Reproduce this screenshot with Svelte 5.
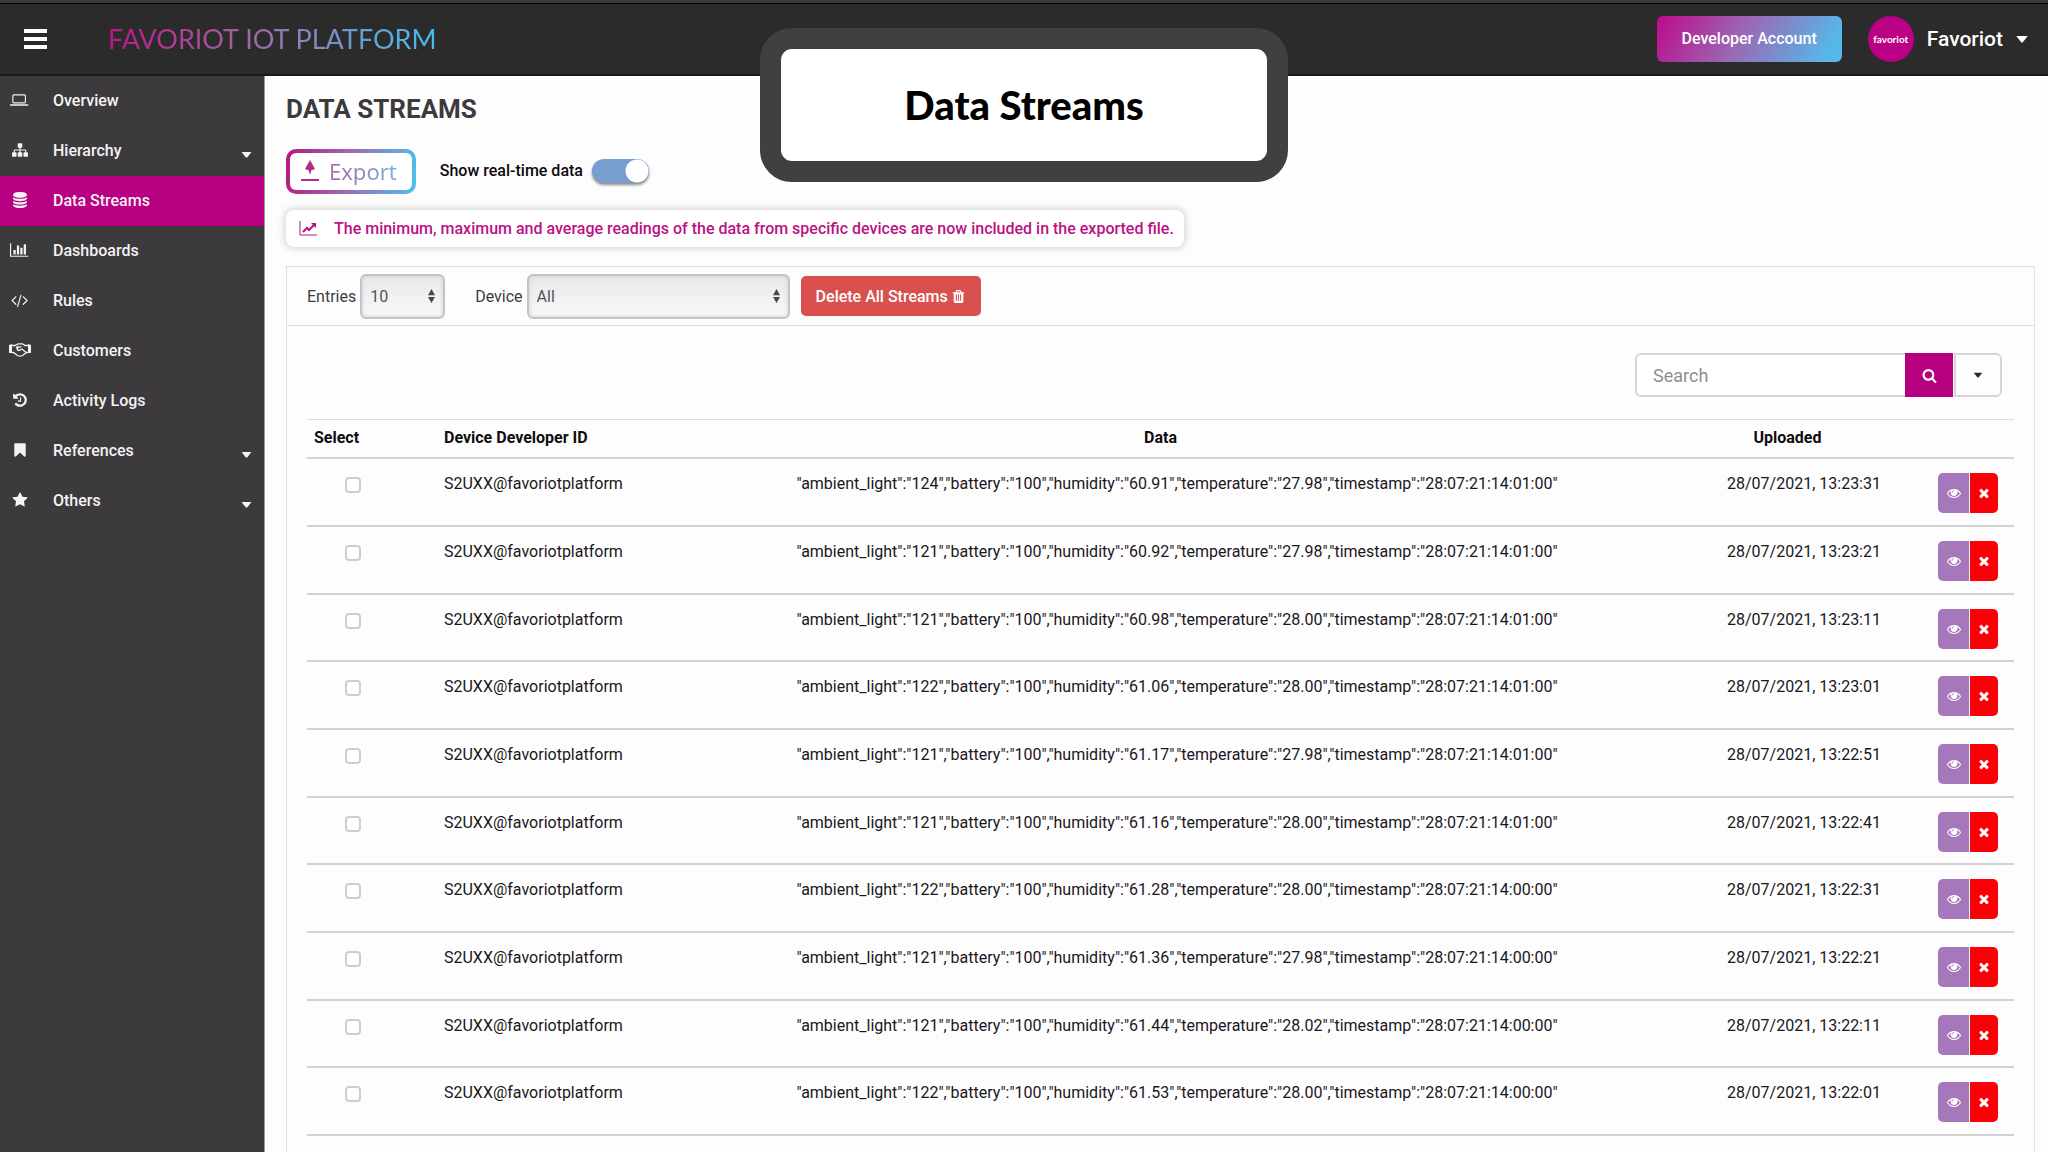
<script>
  const icons = {
    laptop: {
      box: '0 0 2048 1792',
      path: 'M416 1280q-66 0-113-47t-47-113V416q0-66 47-113t113-47h1216q66 0 113 47t47 113v704q0 66-47 113t-113 47H416zM384 416v704q0 32 32 32h1216q32 0 32-32V416q0-32-32-32H416q-32 0-32 32zM2048 1376v96q0 64-160 64H160q-160 0-160-64v-96h2048z'
    },
    sitemap: {
      box: '0 0 1792 1792',
      path: 'M1792 1248v320q0 40-28 68t-68 28h-320q-40 0-68-28t-28-68v-320q0-40 28-68t68-28h96V960H960v192h96q40 0 68 28t28 68v320q0 40-28 68t-68 28H736q-40 0-68-28t-28-68v-320q0-40 28-68t68-28h96V960H320v192h96q40 0 68 28t28 68v320q0 40-28 68t-68 28H96q-40 0-68-28t-28-68v-320q0-40 28-68t68-28h96V960q0-52 38-90t90-38h512V640h-96q-40 0-68-28t-28-68V224q0-40 28-68t68-28h320q40 0 68 28t28 68v320q0 40-28 68t-68 28h-96v192h512q52 0 90 38t38 90v192h96q40 0 68 28t28 68z'
    },
    database: {
      box: '0 0 1792 1792',
      path: 'M896 768q237 0 443-43t325-127v170q0 69-103 128t-280 93.500-385 34.500-385-34.500T231 896 128 768V598q119 84 325 127t443 43zm0 768q237 0 443-43t325-127v170q0 69-103 128t-280 93.500-385 34.500-385-34.500-280-93.500-103-128v-170q119 84 325 127t443 43zm0-384q237 0 443-43t325-127v170q0 69-103 128t-280 93.500-385 34.500-385-34.500-280-93.500-103-128V982q119 84 325 127t443 43zM896 0q208 0 385 34.500t280 93.500 103 128v128q0 69-103 128t-280 93.500T896 640t-385-34.500T231 512 128 384V256q0-69 103-128t280-93.500T896 0z'
    },
    chart: {
      box: '0 0 2048 1792',
      path: 'M640 896v512H384V896h256zm384-512v1024H768V384h256zm1024 1152v128H0V128h128v1408h1920zm-640-896v768h-256V640h256zm384-384v1152h-256V256h256z'
    },
    code: {
      box: '0 0 1920 1792',
      path: 'M617 1399l-50 50q-10 10-23 10t-23-10L55 983q-10-10-10-23t10-23l466-466q10-10 23-10t23 10l50 50q10 10 10 23t-10 23L224 960l393 393q10 10 10 23t-10 23zM1176 359L803 1650q-4 13-15.500 19.500T764 1672l-62-17q-13-4-19.500-15.500T680 1615l373-1291q4-13 15.500-19.500T1092 302l62 17q13 4 19.500 15.500T1176 359zM1865 983l-466 466q-10 10-23 10t-23-10l-50-50q-10-10-10-23t10-23l393-393-393-393q-10-10-10-23t10-23l50-50q10-10 23-10t23 10l466 466q10 10 10 23t-10 23z'
    },
    history: {
      box: '0 0 1792 1792',
      path: 'M1664 896q0 156-61 298t-164 245-245 164-298 61q-172 0-327-72.500T305 1387q-7-10-6.500-22.500t8.500-20.500l137-138q10-9 25-9 16 2 23 12 73 95 179 147t225 52q104 0 198.500-40.500T1258 1258t109.500-163.500T1408 896t-40.500-198.500T1258 534t-163.500-109.500T896 384q-98 0-188 35.500T548 521l137 138q31 30 14 69-17 40-59 40H192q-26 0-45-19t-19-45V256q0-42 40-59 39-17 69 14l130 129q107-101 244.500-156.500T896 128q156 0 298 61t245 164 164 245 61 298zM1024 608v448q0 14-9 23t-23 9H672q-14 0-23-9t-9-23v-64q0-14 9-23t23-9h224V608q0-14 9-23t23-9h64q14 0 23 9t9 23z'
    },
    bookmark: {
      box: '0 0 1792 1792',
      path: 'M1420 128q23 0 44 9 33 13 52.500 41t19.500 62v1289q0 34-19.500 62t-52.500 41q-19 8-44 8-48 0-83-32l-441-424-441 424q-36 33-83 33-23 0-44-9-33-13-52.500-41t-19.500-62V240q0-34 19.500-62t52.500-41q21-9 44-9h1048z'
    },
    star: {
      box: '0 0 1792 1792',
      path: 'M1728 647q0 22-26 48l-363 354 86 500q1 7 1 20 0 21-10.500 35.500t-30.500 14.500q-19 0-40-12l-449-236-449 236q-22 12-40 12-21 0-31.500-14.500t-10.500-35.500q0-6 2-20l86-500-364-354q-25-27-25-48 0-37 56-46l502-73 225-455q19-41 49-41t49 41l225 455 502 73q56 9 56 46z'
    },
    trash: {
      box: '0 0 1792 1792',
      path: 'M704 1376V672q0-14-9-23t-23-9h-64q-14 0-23 9t-9 23v704q0 14 9 23t23 9h64q14 0 23-9t9-23zm256 0V672q0-14-9-23t-23-9h-64q-14 0-23 9t-9 23v704q0 14 9 23t23 9h64q14 0 23-9t9-23zm256 0V672q0-14-9-23t-23-9h-64q-14 0-23 9t-9 23v704q0 14 9 23t23 9h64q14 0 23-9t9-23zM672 384h448l-48-117q-7-9-17-11H738q-10 2-17 11zm928 32v64q0 14-9 23t-23 9h-96v948q0 83-47 143.500t-113 60.500H480q-66 0-113-58.500T320 1464V512h-96q-14 0-23-9t-9-23v-64q0-14 9-23t23-9h309l70-167q15-37 54-63t79-26h320q40 0 79 26t54 63l70 167h309q14 0 23 9t9 23z'
    },
    search: {
      box: '0 0 1792 1792',
      path: 'M1216 832q0-185-131.500-316.500T768 384 451.500 515.500 320 832t131.500 316.500T768 1280t316.500-131.500T1216 832zm512 832q0 52-38 90t-90 38q-54 0-90-38l-343-342q-179 124-399 124-143 0-273.500-55.500t-225-150-150-225T64 832t55.500-273.500 150-225 225-150T768 128t273.500 55.500 225 150 150 225T1472 832q0 220-124 399l343 343q37 37 37 90z'
    },
    eye: {
      box: '0 0 1792 1792',
      path: 'M1664 960q-152-236-381-353 61 104 61 225 0 185-131.500 316.500T896 1280t-316.500-131.500T448 832q0-121 61-225-229 117-381 353 133 205 333.500 326.500T896 1408t434.500-121.500T1664 960zM944 576q0-20-14-34t-34-14q-125 0-214.500 89.500T592 832q0 20 14 34t34 14 34-14 14-34q0-86 61-147t147-61q20 0 34-14t14-34zm848 384q0 34-20 69-140 230-376.500 368.500T896 1536t-499.500-139T20 1029Q0 994 0 960t20-69q140-229 376.500-368T896 384t499.500 139T1772 891q20 35 20 69z'
    },
    close: {
      box: '0 0 1792 1792',
      path: 'M1490 1322q0 40-28 68l-136 136q-28 28-68 28t-68-28l-294-294-294 294q-28 28-68 28t-68-28l-136-136q-28-28-28-68t28-68l294-294-294-294q-28-28-28-68t28-68l136-136q28-28 68-28t68 28l294 294 294-294q28-28 68-28t68 28l136 136q28 28 28 68t-28 68l-294 294 294 294q28 28 28 68z'
    }
  };

  const menu = [
    { label: 'Overview', icon: 'laptop' },
    { label: 'Hierarchy', icon: 'sitemap', sub: true },
    { label: 'Data Streams', icon: 'database', active: true },
    { label: 'Dashboards', icon: 'chart' },
    { label: 'Rules', icon: 'code' },
    { label: 'Customers', icon: 'handshake' },
    { label: 'Activity Logs', icon: 'history' },
    { label: 'References', icon: 'bookmark', sub: true },
    { label: 'Others', icon: 'star', sub: true }
  ];

  const readings = [
    ['124', '60.91', '27.98', '01', '13:23:31'],
    ['121', '60.92', '27.98', '01', '13:23:21'],
    ['121', '60.98', '28.00', '01', '13:23:11'],
    ['122', '61.06', '28.00', '01', '13:23:01'],
    ['121', '61.17', '27.98', '01', '13:22:51'],
    ['121', '61.16', '28.00', '01', '13:22:41'],
    ['122', '61.28', '28.00', '00', '13:22:31'],
    ['121', '61.36', '27.98', '00', '13:22:21'],
    ['121', '61.44', '28.02', '00', '13:22:11'],
    ['122', '61.53', '28.00', '00', '13:22:01']
  ];

  const rows = readings.map(([light, humidity, temperature, minute, time]) => ({
    data: `"ambient_light":"${light}","battery":"100","humidity":"${humidity}","temperature":"${temperature}","timestamp":"28:07:21:14:${minute}:00"`,
    uploaded: `28/07/2021, ${time}`
  }));
</script>

{#snippet icon(name)}
  <svg class="icon {name}" viewBox={icons[name].box} aria-hidden="true"><path d={icons[name].path} /></svg>
{/snippet}

{#snippet caret()}
  <svg class="caret" viewBox="0 0 12 8" aria-hidden="true"><path d="M1 1h10q1 0 0 1L7 7q-1 1-2 0L1 2q-1-1 0-1z" /></svg>
{/snippet}

{#snippet sorter()}
  <svg class="sorter" viewBox="0 0 8 16" aria-hidden="true"><path d="M4 0l4 7H0zM4 16L0 9h8z" /></svg>
{/snippet}

<header class="topbar">
  <button class="burger" aria-label="Toggle menu">
    <svg viewBox="0 0 23 20" aria-hidden="true"><path d="M0 0h23v4H0zM0 8h23v4H0zM0 16h23v4H0z" /></svg>
  </button>
  <a class="brand" href="#home">FAVORIOT IOT PLATFORM</a>
  <button class="account">Developer Account</button>
  <button class="user">
    <span class="avatar">favoriot</span>
    <span>Favoriot</span>
    {@render caret()}
  </button>
</header>

<div class="callout"><div class="callout-box">Data Streams</div></div>

<div class="layout">
  <nav class="sidebar">
    {#each menu as item}
      <a href="#{item.icon}" class:active={item.active}>
        <span class="slot">
          {#if item.icon === 'handshake'}
            <svg class="icon handshake" viewBox="0 0 22 14" aria-hidden="true">
              <path class="solid" d="M0 2l3-1v9H0zM22 2l-3-1v9h3z" />
              <path class="line" d="M3 2.500h3L9 .8h4.500l2.500 1.700h3M3 9.500h1.500l4 3q2.500 1.200 5 0l4-3H19M12.500 3.500L8.500 5q-1 2 1.500 2.500L13 6l4 3.500M9.500 3L7 5" />
            </svg>
          {:else}
            {@render icon(item.icon)}
          {/if}
        </span>
        <span class="label">{item.label}</span>
        {#if item.sub}{@render caret()}{/if}
      </a>
    {/each}
  </nav>

  <main>
    <h1>DATA STREAMS</h1>

    <div class="actions">
      <button class="export">
        <svg viewBox="0 0 18 22" aria-hidden="true"><path d="M9 0l5 9q-2 1-3.500 1L9 15l-1.500-5Q6 10 4 9zM0 19h18v2H0z" /></svg>
        <span>Export</span>
      </button>
      <label for="realtime">Show real-time data</label>
      <input id="realtime" class="switch" type="checkbox" checked />
    </div>

    <p class="notice">
      <svg viewBox="0 0 18 15" aria-hidden="true">
        <path class="axis" d="M1 0v14h17" />
        <path class="trend" d="M4 11l4-4 2 2 5-5" />
        <path class="tip" d="M12 2h5v5z" />
      </svg>
      <span>The minimum, maximum and average readings of the data from specific devices are now included in the exported file.</span>
    </p>

    <section class="panel">
      <div class="filters">
        <label for="entries">Entries</label>
        <span class="select entries">
          <select id="entries"><option>10</option></select>
          {@render sorter()}
        </span>
        <label for="device" class="device-label">Device</label>
        <span class="select device">
          <select id="device"><option>All</option></select>
          {@render sorter()}
        </span>
        <button class="delete-all">Delete All Streams {@render icon('trash')}</button>
      </div>

      <div class="content">
        <form class="search-bar">
          <input type="search" placeholder="Search" aria-label="Search" />
          <button type="button" class="go" aria-label="Search">{@render icon('search')}</button>
          <button type="button" class="more" aria-label="Search options">{@render caret()}</button>
        </form>

        <table>
          <thead>
            <tr>
              <th class="pick">Select</th>
              <th class="owner">Device Developer ID</th>
              <th class="center">Data</th>
              <th class="when center">Uploaded</th>
              <th class="tools" aria-label="Actions"></th>
            </tr>
          </thead>
          <tbody>
            {#each rows as row}
              <tr>
                <td><input class="tick" type="checkbox" aria-label="Select row {row.uploaded}" /></td>
                <td>S2UXX@favoriotplatform</td>
                <td class="center">{row.data}</td>
                <td class="center">{row.uploaded}</td>
                <td>
                  <div class="pair">
                    <button class="view" aria-label="View">{@render icon('eye')}</button>
                    <button class="remove" aria-label="Delete">{@render icon('close')}</button>
                  </div>
                </td>
              </tr>
            {/each}
          </tbody>
        </table>
      </div>
    </section>
  </main>
</div>

<style>
  :global(html) {
    height: 100%;
    overflow: hidden;
  }
  :global(body) {
    height: 100%;
    overflow: hidden;
    background: #fefdfe;
    color: #19171a;
    font-family: Roboto, 'Liberation Sans', sans-serif;
    font-size: 16px;
  }
  :global(#app) {
    min-height: 100%;
    display: flex;
    flex-direction: column;
  }
  button,
  input,
  select {
    font: inherit;
    color: inherit;
    margin: 0;
    padding: 0;
    border: 0;
    box-sizing: border-box;
  }
  button {
    background: none;
    cursor: pointer;
  }
  svg {
    fill: currentColor;
    flex: none;
    display: block;
  }
  .icon {
    height: 16px;
  }
  .caret {
    width: 12px;
    height: 8px;
  }

  .topbar {
    display: flex;
    align-items: center;
    height: 76px;
    box-sizing: border-box;
    padding: 0 20px 0 24px;
    border-top: 3px solid #3a393b;
    border-bottom: 2px solid #1b191b;
    box-shadow: inset 0 1px #000;
    background: #2b2b2b;
    color: #fff;
  }
  .burger svg {
    width: 23px;
    height: 20px;
  }
  .brand {
    margin: 0 auto 0 61px;
    font: 27px/36px Lato, sans-serif;
    text-decoration: none;
    color: transparent;
    background: linear-gradient(90deg, #b8168a, #a4619f 40%, #8388bb 60%, #45bdf0);
    background-clip: text;
  }
  .account {
    height: 46px;
    padding: 0 25px;
    border-radius: 6px;
    background: linear-gradient(120deg, #bd0a8a, #9a68b4 45%, #56b8ea 92%);
    font-weight: 500;
  }
  .user {
    display: flex;
    align-items: center;
    gap: 13px;
    margin-left: 26px;
    font-size: 21px;
    font-weight: 500;
  }
  .avatar {
    display: grid;
    place-items: center;
    width: 46px;
    height: 46px;
    border-radius: 50%;
    background: #bb0085;
    font: bold 10px Lato, sans-serif;
  }

  .callout {
    position: absolute;
    top: 28px;
    left: 0;
    right: 0;
    display: flex;
    justify-content: center;
    pointer-events: none;
  }
  .callout-box {
    display: grid;
    place-items: center;
    width: 486px;
    height: 112px;
    border: 21px solid #423f42;
    border-radius: 32px;
    background: #fff;
    color: #000;
    font: 900 40px Lato, sans-serif;
  }

  .layout {
    flex: 1;
    display: flex;
  }
  .sidebar {
    flex: none;
    width: 264px;
    background: #3d3a3d;
    border-right: 1px solid #9c9a9c;
    color: #f4f2f4;
  }
  .sidebar a {
    display: flex;
    align-items: center;
    box-sizing: border-box;
    height: 50px;
    padding: 0 12px 2px 8px;
    color: inherit;
    text-decoration: none;
    font-weight: 500;
  }
  .sidebar a.active {
    background: #b80082;
  }
  .slot {
    display: grid;
    place-items: center;
    width: 23px;
    margin-right: 22px;
  }
  .label {
    flex: 1;
  }
  .sidebar .caret {
    width: 11px;
    height: 7px;
    margin-top: 8px;
  }
  .icon.handshake {
    width: 22px;
    height: 14px;
  }
  .handshake .line {
    fill: none;
    stroke: currentColor;
    stroke-width: 1.3;
  }

  main {
    flex: 1;
    min-width: 0;
    display: flex;
    flex-direction: column;
    padding: 18px 13px 0 21px;
  }
  h1 {
    margin: 0 0 24px;
    font-size: 26px;
    line-height: 31px;
    font-weight: 700;
    color: #3d3a3d;
  }
  .actions {
    display: flex;
    align-items: center;
    margin-bottom: 16px;
    font-weight: 500;
    color: #0b090b;
  }
  .export {
    display: flex;
    align-items: center;
    gap: 10px;
    height: 45px;
    padding: 0 15px 2px 11px;
    margin-right: 24px;
    border: 4px solid transparent;
    border-radius: 10px;
    background:
      linear-gradient(#fff, #fff) padding-box,
      linear-gradient(100deg, #b9157f, #9a6fb0 50%, #4fc0f0) border-box;
    font: 22px 'Noto Sans', sans-serif;
    color: #b52a88;
  }
  .export svg {
    width: 18px;
    height: 22px;
  }
  .export span {
    color: transparent;
    background: linear-gradient(90deg, #b06aae, #8f8fc6 60%, #74b0de);
    background-clip: text;
  }
  .actions label {
    padding-bottom: 2px;
  }
  .switch {
    appearance: none;
    width: 57px;
    height: 24px;
    margin: 0 0 2px 9px;
    border-radius: 12px;
    background: radial-gradient(circle at 45px 12px, #fff 11px, transparent 12px) #769fd0;
    box-shadow: 0 2px 3px #8a888a;
  }
  .switch:not(:checked) {
    background: radial-gradient(circle at 12px 12px, #fff 11px, transparent 12px) #b9b7b9;
  }
  .notice {
    display: flex;
    align-items: center;
    align-self: flex-start;
    gap: 17px;
    height: 37px;
    margin: 0 0 19px;
    padding: 0 10px 0 13px;
    border-radius: 8px;
    background: #fff;
    box-shadow: 0 0 7px 2px #d9d6d9;
    color: #bb1184;
    font-weight: 500;
  }
  .notice svg {
    width: 18px;
    height: 15px;
  }
  .axis,
  .trend {
    fill: none;
    stroke: currentColor;
  }
  .trend {
    stroke-width: 2;
  }

  .panel {
    flex: 1;
    border: 1px solid #e0dfe1;
    border-bottom: 0;
  }
  .filters {
    display: flex;
    align-items: center;
    height: 58px;
    padding: 0 20px;
    border-bottom: 1px solid #dcdbdd;
    color: #3d3b3e;
  }
  .select {
    display: grid;
    align-items: center;
    margin-left: 4px;
  }
  .select > :global(*) {
    grid-area: 1 / 1;
  }
  .entries {
    width: 85px;
  }
  .device {
    width: 263px;
  }
  .device-label {
    margin-left: 30px;
  }
  select {
    appearance: none;
    width: 100%;
    height: 45px;
    padding: 0 8px;
    border: 2px solid #c5c3c6;
    border-radius: 6px;
    background: linear-gradient(#e9e7ea, #f9f8f9);
    box-shadow: inset 0 0 4px #cfcdd0;
    color: #555;
  }
  .sorter {
    width: 7px;
    height: 14px;
    justify-self: end;
    margin-right: 10px;
    color: #4a484b;
    pointer-events: none;
  }
  .delete-all {
    display: flex;
    align-items: center;
    gap: 3px;
    height: 40px;
    margin-left: 11px;
    padding: 0 15px;
    border-radius: 5px;
    background: #d9514e;
    color: #fff;
    font-weight: 500;
  }
  .delete-all :global(.icon) {
    height: 15px;
  }

  .content {
    padding: 27px 20px 0;
  }
  .search-bar {
    display: flex;
    justify-content: flex-end;
    margin: 0 12px 22px 0;
  }
  .search-bar input {
    width: 270px;
    height: 44px;
    padding: 0 16px;
    border: 2px solid #d8d5da;
    border-right: 0;
    border-radius: 6px 0 0 6px;
    background: #fff;
    font-size: 18px;
  }
  .search-bar input::placeholder {
    color: #8f8d90;
    opacity: 1;
  }
  .go,
  .more {
    display: grid;
    place-items: center;
    width: 48px;
    height: 44px;
  }
  .go {
    background: #b5007f;
    color: #fff;
  }
  .go :global(.icon) {
    height: 15px;
  }
  .more {
    margin-left: 1px;
    border: 2px solid #d8d5da;
    border-radius: 0 6px 6px 0;
    color: #2e2c2f;
  }
  .more .caret {
    width: 10px;
    height: 6px;
  }

  table {
    width: 100%;
    table-layout: fixed;
    border-collapse: separate;
    border-spacing: 0;
  }
  th,
  td {
    box-sizing: border-box;
    padding: 0 7px;
    text-align: left;
    white-space: nowrap;
  }
  th {
    height: 40px;
    padding-bottom: 10px;
    border-top: 1px solid #dddbde;
    border-bottom: 2px solid #d6d4d7;
    font-weight: 700;
    vertical-align: bottom;
    color: #0f0d10;
  }
  td {
    height: 68px;
    padding-top: 14px;
    border-bottom: 2px solid #d2d0d3;
    line-height: 21px;
    vertical-align: top;
  }
  tr:nth-child(3n) td {
    height: 67px;
  }
  .center {
    text-align: center;
  }
  th.center {
    padding-right: 40px;
  }
  .pick {
    width: 130px;
  }
  .owner {
    width: 240px;
  }
  .when {
    width: 254px;
  }
  .tools {
    width: 83px;
  }
  .tick {
    appearance: none;
    display: block;
    width: 16px;
    height: 16px;
    margin: 4px 0 0 31px;
    border: 2px solid #cfccd2;
    border-radius: 4px;
    background: #fff;
  }
  .tick:checked {
    background: #b80082;
  }
  .pair {
    display: flex;
    gap: 1px;
    color: #fff;
  }
  .pair button {
    display: grid;
    place-items: center;
    height: 40px;
  }
  .view {
    width: 31px;
    border-radius: 5px 0 0 5px;
    background: #a678bb;
  }
  .remove {
    width: 28px;
    border-radius: 0 5px 5px 0;
    background: #fb0006;
  }
  .pair :global(.icon) {
    height: 14px;
  }
</style>
